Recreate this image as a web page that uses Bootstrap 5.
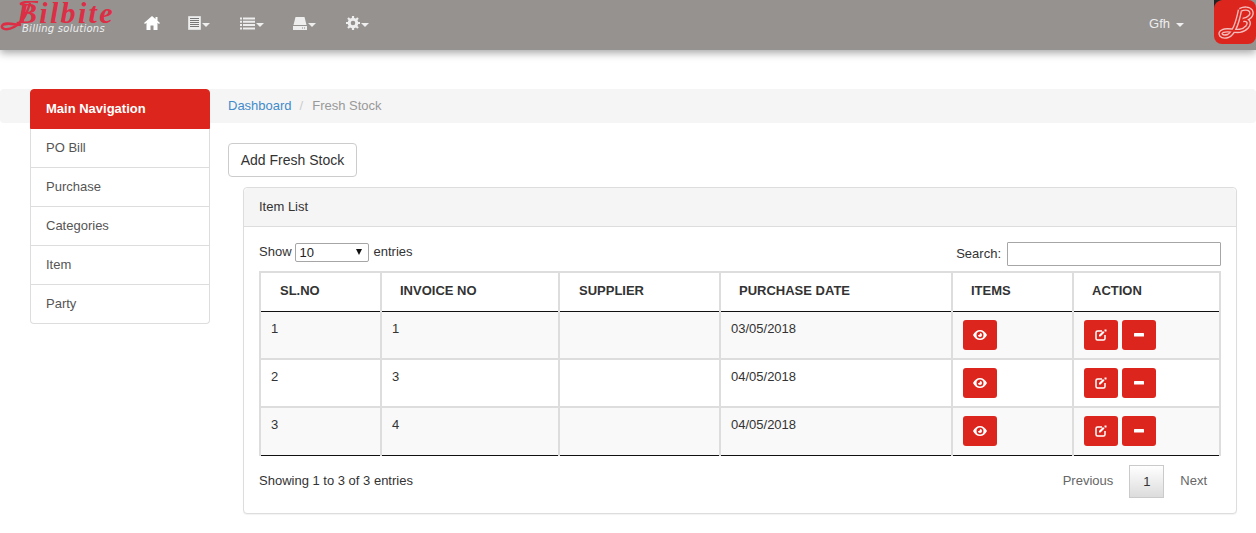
<!DOCTYPE html>
<html lang="en">
<head>
<meta charset="utf-8">
<title>Fresh Stock</title>
<link href="https://cdn.jsdelivr.net/npm/bootstrap@5.3.0/dist/css/bootstrap.min.css" rel="stylesheet">
<style>
html,body{height:533px;overflow:hidden}
body{font-family:"Liberation Sans",Arial,sans-serif;font-size:13px;line-height:20px;color:#333;background:#fff}
a{text-decoration:none}
.topbar{height:50px;background:#959290;box-shadow:0 3px 8px rgba(0,0,0,.35);display:flex;align-items:flex-start;position:relative}
.brandbox{width:130px;height:50px;position:relative;flex:none}
.brandname{display:block;font-family:"Liberation Serif",serif;font-style:italic;font-weight:700;font-size:30px;line-height:24px;color:#dc2f45;padding-left:17px;letter-spacing:2.300px;height:24px;margin-top:1px}
.brandsub{display:block;font-family:"DejaVu Sans",sans-serif;font-style:italic;font-size:10px;line-height:12px;color:#eee;padding-left:22px;margin-top:-2px;letter-spacing:.25px}
.swoosh{position:absolute;left:0;top:1px}
.navicons{display:flex;margin-left:14px;height:50px;align-items:center;padding-bottom:4px}
.navicon{display:flex;align-items:center;width:52.5px}
.navicon.homeicon{width:44px}
.navicon.listicon svg{margin-left:-1px}
.navicon svg{display:block}
.caretx{display:inline-block;border-top:4px solid #eee;border-left:4px solid transparent;border-right:4px solid transparent;margin-left:1px;margin-top:3px}
.userlink{margin-left:auto;color:#eee;height:47px;display:flex;align-items:center;margin-right:30px}
.userlink .caretx{margin-left:6px}
.applogo{width:42px;height:44px;flex:none;display:block}
.crumbband{margin-top:39px;height:34px;background:#f5f5f5;border-radius:4px;padding:7px 0 0 228px;color:#999}
.crumbband a{color:#428bca}
.crumbsep{color:#ccc;padding:0 9px 0 5px;margin-left:3px}
.layoutrow{display:flex;align-items:flex-start}
.sidemenu{width:180px;margin:-34px 0 0 30px;flex:none;border-radius:4px;position:relative;--bs-list-group-border-color:#ddd}
.sidemenu .list-group-item{height:39px;padding:9px 15px;color:#555;font-size:13px;line-height:20px}
.sidemenu .sidehead{height:40px;background:#dc251c;border-color:#dc251c;color:#fff;font-weight:700;padding:9px 15px}
.mainpane{flex:1;margin-left:18px;min-width:0;padding-top:20px}
.addbtn{display:block;height:34px;width:129px;padding:0;border:1px solid #ccc;border-radius:4px;background:#fff;color:#333;font-size:14px;line-height:32px;text-align:center}
.listpanel{margin:10px 19px 0 15px;height:327px;border:1px solid #ddd;border-radius:4px;box-shadow:0 1px 1px rgba(0,0,0,.05);--bs-card-border-color:#ddd}
.listpanel .card-header{height:39px;padding:9px 15px;background:#f5f5f5;border-bottom:1px solid #ddd;font-size:13px;line-height:20px;color:#333}
.listbody{padding:0 15px}
.tabletop{height:44px;display:flex;justify-content:space-between;font-size:13px}
.lenbox{padding-top:14px;line-height:20px;display:flex;align-items:center;height:34px;margin-top:1px}
.lensel{width:74px;height:19px;margin:0 5px 0 3px;border:1px solid #a6a6a6;border-radius:2px;display:inline-flex;justify-content:space-between;align-items:center;padding:0 6px 0 4px;color:#222;line-height:15px;background:#fff}
.lenarrow{border-top:6px solid #111;border-left:3.5px solid transparent;border-right:3.5px solid transparent}
.searchbox{display:flex;align-items:center;padding-top:15px;height:39px}
.searchbox input{width:214px;height:24px;margin-left:6px;border:1px solid #a6a6a6;border-radius:1px;padding:0}
.stocktable{width:960px;table-layout:fixed;border-collapse:collapse;font-size:13px;margin:0}
.stocktable th,.stocktable td{border:2px solid #ddd;color:#333}
.stocktable th{height:39px;padding:0 18px 2px;font-size:13px;font-weight:700;line-height:16px;border-bottom:1px solid #111;vertical-align:middle}
.stocktable th:nth-child(1),.stocktable th:nth-child(3){padding-left:19px}
.stocktable td{height:48px;padding:7px 10px;vertical-align:top;line-height:20px}
.stocktable tbody tr:first-child td{border-top:1px solid #111}
.stocktable tbody tr:nth-child(odd) td{background:#f9f9f9}
.stocktable tbody tr:last-child td{border-bottom:1px solid #111}
.redbtn{display:inline-flex;align-items:center;justify-content:center;width:34px;height:30px;margin-top:1px;background:#dc251c;border:0;border-radius:3px;padding:0;vertical-align:top}
.redbtn+.redbtn{margin-left:4px}
.tablefoot{display:flex;justify-content:space-between;font-size:13px;padding-top:15px}
.pagerx{display:flex;align-items:flex-start;margin-top:-6px;margin-right:0}
.pagerx span{display:block;height:33px;line-height:31px;color:#666}
.pgprev{padding:0 16px 0 0}
.pgcur{width:35px;text-align:center;border:1px solid #cacaca;background:linear-gradient(#fff,#dcdcdc);color:#333!important}
.pgnext{padding:0 14px 0 16px}
</style>
</head>
<body>
<nav class="topbar">
  <a class="brandbox" href="#">
    <svg class="swoosh" width="60" height="34" viewBox="0 0 60 34"><path d="M20 3Q28 -1 38 1M30 2C27 12 24 20 14 26 7 30 1 28 2 25 4 21 12 23 21 24" fill="none" stroke="#dc2f45" stroke-width="2.500"/></svg>
    <span class="brandname">Bilbite</span>
    <span class="brandsub">Billing solutions</span>
  </a>
  <div class="navicons">
    <a class="navicon homeicon" href="#"><svg width="16" height="14" viewBox="0 0 16 14"><path d="M8 0 0 7l1 1 1.500-1.200V14H6.500V9.500h3V14h4V6.800L15 8l1-1-2.500-2.200V1h-2v2Z" fill="#fff"/></svg></a>
    <a class="navicon" href="#"><svg width="13" height="14" viewBox="0 0 13 14"><path d="M.5.500h12v13H.5z" fill="#eee" stroke="#ddd"/><path d="M2 2.500h9M2 4.500h9M2 6.500h9M2 8.500h9M2 10.500h9" stroke="#777" stroke-width="1"/></svg><i class="caretx"></i></a>
    <a class="navicon listicon" href="#"><svg width="15" height="13" viewBox="0 0 15 13"><path d="M0 1.500h2M3 1.500h12M0 4.800h2M3 4.800h12M0 8.100h2M3 8.100h12M0 11.400h2M3 11.400h12" stroke="#eee" stroke-width="2"/></svg><i class="caretx"></i></a>
    <a class="navicon" href="#"><svg width="14" height="13" viewBox="0 0 14 13"><path d="M2.500 0h9l2 8H.5Z" fill="#eee"/><path d="M0 9h14v4H0z" fill="#eee"/><path d="M9 11h1M11 11h1" stroke="#888"/></svg><i class="caretx"></i></a>
    <a class="navicon" href="#"><svg width="14" height="14" viewBox="0 0 14 14"><circle cx="7" cy="7" r="3.800" fill="none" stroke="#eee" stroke-width="3"/><path d="M7 0v3M7 11v3M0 7h3M11 7h3M2 2l2 2M10 10l2 2M12 2l-2 2M4 10l-2 2" stroke="#eee" stroke-width="2.200"/></svg><i class="caretx"></i></a>
  </div>
  <a class="userlink" href="#">Gfh <i class="caretx"></i></a>
  <svg class="applogo" viewBox="0 0 42 44"><rect width="42" height="44" rx="8" fill="#dc251c"/><path d="M0 8V0h8Q1 1 0 8Z" fill="#222"/><path d="M26 10C24 20 21 33 14 36 7 38 4 33 9 31 15 28 26 35 33 27 37 22 33 19 29 20 35 19 39 15 37 11 35 8 30 8 26 10" fill="none" stroke="#f4bcbc" stroke-width="4.500"/><path d="M26 10C24 20 21 33 14 36 7 38 4 33 9 31 15 28 26 35 33 27 37 22 33 19 29 20 35 19 39 15 37 11 35 8 30 8 26 10" fill="none" stroke="#dc251c" stroke-width="1.800"/></svg>
</nav>
<div class="crumbband"><a href="#">Dashboard</a><span class="crumbsep">/</span>Fresh Stock</div>
<div class="layoutrow">
  <div class="list-group sidemenu">
    <div class="list-group-item sidehead">Main Navigation</div>
    <a class="list-group-item" href="#">PO Bill</a>
    <a class="list-group-item" href="#">Purchase</a>
    <a class="list-group-item" href="#">Categories</a>
    <a class="list-group-item" href="#">Item</a>
    <a class="list-group-item" href="#">Party</a>
  </div>
  <main class="mainpane">
    <a class="addbtn" href="#">Add Fresh Stock</a>
    <section class="card listpanel">
      <div class="card-header">Item List</div>
      <div class="listbody">
        <div class="tabletop">
          <div class="lenbox">Show <span class="lensel">10<i class="lenarrow"></i></span> entries</div>
          <div class="searchbox">Search:<input type="text" aria-label="Search"></div>
        </div>
        <table class="stocktable">
          <colgroup><col style="width:121px"><col style="width:178px"><col style="width:161px"><col style="width:232px"><col style="width:121px"><col style="width:147px"></colgroup>
          <thead><tr><th>SL.NO</th><th>INVOICE NO</th><th>SUPPLIER</th><th>PURCHASE DATE</th><th>ITEMS</th><th>ACTION</th></tr></thead>
          <tbody>
            <tr><td>1</td><td>1</td><td></td><td>03/05/2018</td>
              <td><button class="redbtn" aria-label="View"><svg width="14" height="10" viewBox="0 0 14 10"><path fill="#fff" fill-rule="evenodd" d="M7 0c3 0 5.500 2 7 5-1.500 3-4 5-7 5S1.500 8 0 5c1.500-3 4-5 7-5Zm0 1.500a3.500 3.500 0 1 0 0 7 3.500 3.500 0 0 0 0-7ZM7 3a2 2 0 1 1-2 2c1 .4 2.300-.6 2-2Z"/></svg></button></td>
              <td><button class="redbtn" aria-label="Edit"><svg width="12" height="12" viewBox="0 0 12 12"><path d="M7 2H2.500A1.500 1.500 0 0 0 1 3.500v6A1.500 1.500 0 0 0 2.500 11h6A1.500 1.500 0 0 0 10 9.500V6" fill="none" stroke="#fff" stroke-width="1.500"/><path d="M4 6 8 2l1.500 1.500-4 4H4Z" fill="#fff"/><rect x="9.500" y=".5" width="2" height="2" fill="#fff"/></svg></button><button class="redbtn" aria-label="Remove"><svg width="10" height="4" viewBox="0 0 10 4"><rect width="10" height="3.500" rx=".5" fill="#fff"/></svg></button></td></tr>
            <tr><td>2</td><td>3</td><td></td><td>04/05/2018</td>
              <td><button class="redbtn" aria-label="View"><svg width="14" height="10" viewBox="0 0 14 10"><path fill="#fff" fill-rule="evenodd" d="M7 0c3 0 5.500 2 7 5-1.500 3-4 5-7 5S1.500 8 0 5c1.500-3 4-5 7-5Zm0 1.500a3.500 3.500 0 1 0 0 7 3.500 3.500 0 0 0 0-7ZM7 3a2 2 0 1 1-2 2c1 .4 2.300-.6 2-2Z"/></svg></button></td>
              <td><button class="redbtn" aria-label="Edit"><svg width="12" height="12" viewBox="0 0 12 12"><path d="M7 2H2.500A1.500 1.500 0 0 0 1 3.500v6A1.500 1.500 0 0 0 2.500 11h6A1.500 1.500 0 0 0 10 9.500V6" fill="none" stroke="#fff" stroke-width="1.500"/><path d="M4 6 8 2l1.500 1.500-4 4H4Z" fill="#fff"/><rect x="9.500" y=".5" width="2" height="2" fill="#fff"/></svg></button><button class="redbtn" aria-label="Remove"><svg width="10" height="4" viewBox="0 0 10 4"><rect width="10" height="3.500" rx=".5" fill="#fff"/></svg></button></td></tr>
            <tr><td>3</td><td>4</td><td></td><td>04/05/2018</td>
              <td><button class="redbtn" aria-label="View"><svg width="14" height="10" viewBox="0 0 14 10"><path fill="#fff" fill-rule="evenodd" d="M7 0c3 0 5.500 2 7 5-1.500 3-4 5-7 5S1.500 8 0 5c1.500-3 4-5 7-5Zm0 1.500a3.500 3.500 0 1 0 0 7 3.500 3.500 0 0 0 0-7ZM7 3a2 2 0 1 1-2 2c1 .4 2.300-.6 2-2Z"/></svg></button></td>
              <td><button class="redbtn" aria-label="Edit"><svg width="12" height="12" viewBox="0 0 12 12"><path d="M7 2H2.500A1.500 1.500 0 0 0 1 3.500v6A1.500 1.500 0 0 0 2.500 11h6A1.500 1.500 0 0 0 10 9.500V6" fill="none" stroke="#fff" stroke-width="1.500"/><path d="M4 6 8 2l1.500 1.500-4 4H4Z" fill="#fff"/><rect x="9.500" y=".5" width="2" height="2" fill="#fff"/></svg></button><button class="redbtn" aria-label="Remove"><svg width="10" height="4" viewBox="0 0 10 4"><rect width="10" height="3.500" rx=".5" fill="#fff"/></svg></button></td></tr>
          </tbody>
        </table>
        <div class="tablefoot">
          <div>Showing 1 to 3 of 3 entries</div>
          <div class="pagerx"><span class="pgprev">Previous</span><span class="pgcur">1</span><span class="pgnext">Next</span></div>
        </div>
      </div>
    </section>
  </main>
</div>
<script src="https://cdn.jsdelivr.net/npm/bootstrap@5.3.0/dist/js/bootstrap.bundle.min.js"></script>
</body>
</html>
